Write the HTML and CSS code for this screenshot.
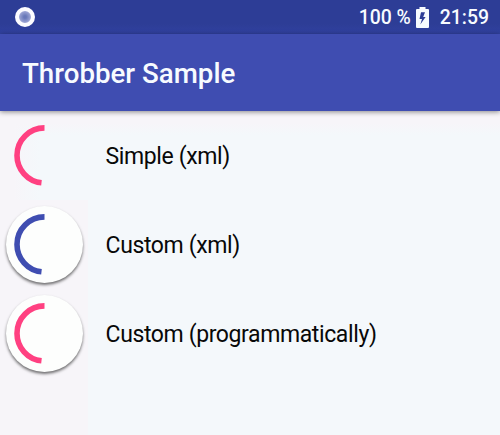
FILE: index.html
```html
<!DOCTYPE html>
<html lang="en">
<head>
<meta charset="utf-8">
<title>Throbber Sample</title>
<link rel="stylesheet" href="styles.css">
</head>
<body>
<header class="status">
  <span class="recorder"></span>
  <div class="system">
    <span class="charge">100 %</span>
    <svg class="battery" width="13" height="21" viewBox="0 0 13 21"><path fill="#f7fbff" fill-rule="evenodd" d="M3.500 0h6v2H12q1 0 1 1v17q0 1-1 1H1q-1 0-1-1V3q0-1 1-1h2.500zM5 5.300L3.500 12H6L4.300 17.500 9.600 10H7.200L9 5.300z"/></svg>
    <time class="clock">21:59</time>
  </div>
</header>
<div class="appbar"><h1 class="title">Throbber Sample</h1></div>
<main class="list">
  <div class="row">
    <div class="disc plain"><svg class="arc pink" viewBox="0 0 77 77"><path d="M38.500 10.900A27.500 27.500 0 0 0 11 38.400A27.500 27.500 0 0 0 35.500 65.740"/></svg></div>
    <span class="label">Simple (xml)</span>
  </div>
  <div class="row">
    <div class="disc"><svg class="arc blue" viewBox="0 0 77 77"><path d="M38.500 10.900A27.500 27.500 0 0 0 11 38.400A27.500 27.500 0 0 0 35.500 65.740"/></svg></div>
    <span class="label">Custom (xml)</span>
  </div>
  <div class="row">
    <div class="disc"><svg class="arc pink" viewBox="0 0 77 77"><path d="M38.500 10.900A27.500 27.500 0 0 0 11 38.400A27.500 27.500 0 0 0 35.500 65.740"/></svg></div>
    <span class="label">Custom (programmatically)</span>
  </div>
</main>
</body>
</html>
```
FILE: styles.css
```css
body {
  margin: 0;
  height: 435px;
  overflow: hidden;
  display: flex;
  flex-direction: column;
  font-family: Roboto, "Liberation Sans", sans-serif;
}
.status {
  height: 34px;
  display: flex;
  align-items: center;
  justify-content: space-between;
  padding: 0 11px 0 15px;
  background: linear-gradient(#2d3d96 70%, #3141a0);
  color: #f7fbff;
  font-size: 19.4px;
  font-weight: 500;
  box-sizing: border-box;
}
.recorder {
  width: 20px;
  height: 20px;
  box-sizing: border-box;
  border: 4px solid #fcfcff;
  border-radius: 50%;
  background: radial-gradient(circle, #6878b9 15%, #a0a8d6 70%);
}
.system {
  display: flex;
  align-items: center;
}
.battery {
  margin: 0 11px 0 5px;
}
.appbar {
  height: 77px;
  box-sizing: border-box;
  display: flex;
  align-items: center;
  padding: 2px 0 0 22px;
  background: #3f4db1;
  box-shadow: 0 1px 5px rgba(0, 0, 0, .45);
  z-index: 1;
}
.title {
  margin: 0;
  color: #f7fbff;
  font-size: 27.7px;
  font-weight: 500;
}
.list {
  flex: 1;
  background: linear-gradient(90deg, #f7f5f9 88px, #f4f8fb 88px);
}
.row {
  height: 89px;
  display: flex;
  align-items: center;
  padding-left: 6px;
}
.row:first-child {
  background: linear-gradient(#f7f5f9, #f7f5f9 12px, transparent 24px), linear-gradient(90deg, #f7f5f9 14px, #f4f8fb 40px);
}
.disc {
  width: 77px;
  height: 77px;
  border-radius: 50%;
  background: #fdfefd;
  box-shadow: 0 2px 3px rgba(0, 0, 0, .55);
}
.plain {
  background: none;
  box-shadow: none;
}
.arc {
  display: block;
  fill: none;
  stroke-width: 5.6;
}
.pink { stroke: #ff4081; }
.blue { stroke: #3f4db1; }
.label {
  margin-left: 22.6px;
  padding-top: 2px;
  font-size: 23px;
  letter-spacing: -.39px;
  color: #080808;
}
```
